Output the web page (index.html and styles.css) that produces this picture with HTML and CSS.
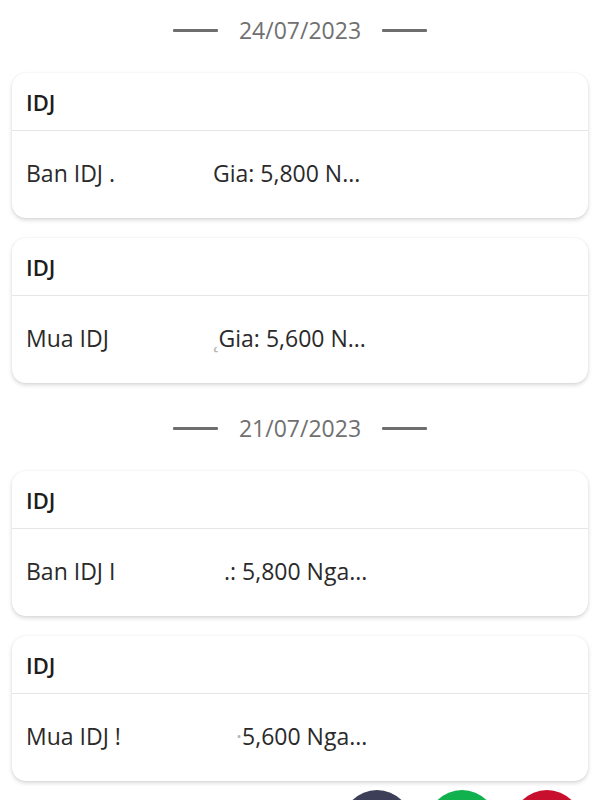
FILE: index.html
```html
<!DOCTYPE html>
<html>
<head>
<meta charset="utf-8">
<link rel="stylesheet" href="styles.css">
</head>
<body>
<main class="list">
  <div class="date"><span class="line"></span><span class="date-text">24/07/2023</span><span class="line"></span></div>
  <section class="card">
    <div class="card-head">IDJ</div>
    <div class="card-body"><span class="lead lead-1">Ban IDJ .</span><span>Gia: 5,800 N...</span></div>
  </section>
  <section class="card">
    <div class="card-head">IDJ</div>
    <div class="card-body"><span class="lead lead-2">Mua IDJ</span><span class="faint">˛</span> <span>Gia: 5,600 N...</span></div>
  </section>
  <div class="date"><span class="line"></span><span class="date-text">21/07/2023</span><span class="line"></span></div>
  <section class="card">
    <div class="card-head">IDJ</div>
    <div class="card-body"><span class="lead lead-3">Ban IDJ I</span><span>.: 5,800 Nga...</span></div>
  </section>
  <section class="card">
    <div class="card-head">IDJ</div>
    <div class="card-body"><span class="lead lead-4">Mua IDJ !</span><span class="faint">·</span>  <span>5,600 Nga...</span></div>
  </section>
</main>
<div class="fabs">
  <span class="fab fab-navy"></span>
  <span class="fab fab-green"></span>
  <span class="fab fab-red"></span>
</div>
</body>
</html>
```
FILE: styles.css
```css
html, body {
  margin: 0;
  padding: 0;
  background: #ffffff;
  font-family: "Open Sans", "Noto Sans", sans-serif;
  color: #2a2a2a;
}
body {
  width: 600px;
  height: 800px;
  overflow: hidden;
  position: relative;
}
.list {
  display: flex;
  flex-direction: column;
  padding: 0 12px;
}
.date {
  height: 60px;
  display: flex;
  align-items: center;
  justify-content: center;
  gap: 21px;
}
.card + .date { margin-top: 15px; }
.date + .card { margin-top: 13px; }
.card + .card { margin-top: 20px; }
.line {
  width: 45px;
  height: 3px;
  background: #6e6e6e;
  border-radius: 1px;
}
.date-text {
  font-size: 23px;
  color: #707070;
}
.card {
  background: #fff;
  border-radius: 14px;
  box-shadow: 0 2px 4px rgba(0,0,0,0.16), 0 0 2px rgba(0,0,0,0.06);
  height: 145px;
  display: flex;
  flex-direction: column;
}
.card-head {
  height: 57px;
  border-bottom: 1.5px solid #e6e6e6;
  display: flex;
  align-items: center;
  padding: 0 14px;
  font-size: 22px;
  font-weight: 600;
  color: #1d1d1d;
}
.card-body {
  flex: 1;
  display: flex;
  align-items: center;
  padding: 0 14px 4px;
  font-size: 23px;
  color: #2a2a2a;
  white-space: pre;
}
.lead { display: inline-block; }
.lead-1 { width: 187px; }
.lead-2 { width: 187px; }
.lead-3 { width: 198px; }
.lead-4 { width: 210px; }
.faint { color: #b5b5b5; }
.fabs {
  position: absolute;
  left: 342px;
  bottom: 0;
  height: 10px;
  overflow: hidden;
  display: flex;
  align-items: flex-start;
  gap: 15px;
}
.fab {
  width: 70px;
  height: 70px;
  flex: none;
  border-radius: 50%;
  display: block;
}
.fab-navy { background: #3c3f57; }
.fab-green { background: #11b14d; }
.fab-red { background: #c8102e; }
```
